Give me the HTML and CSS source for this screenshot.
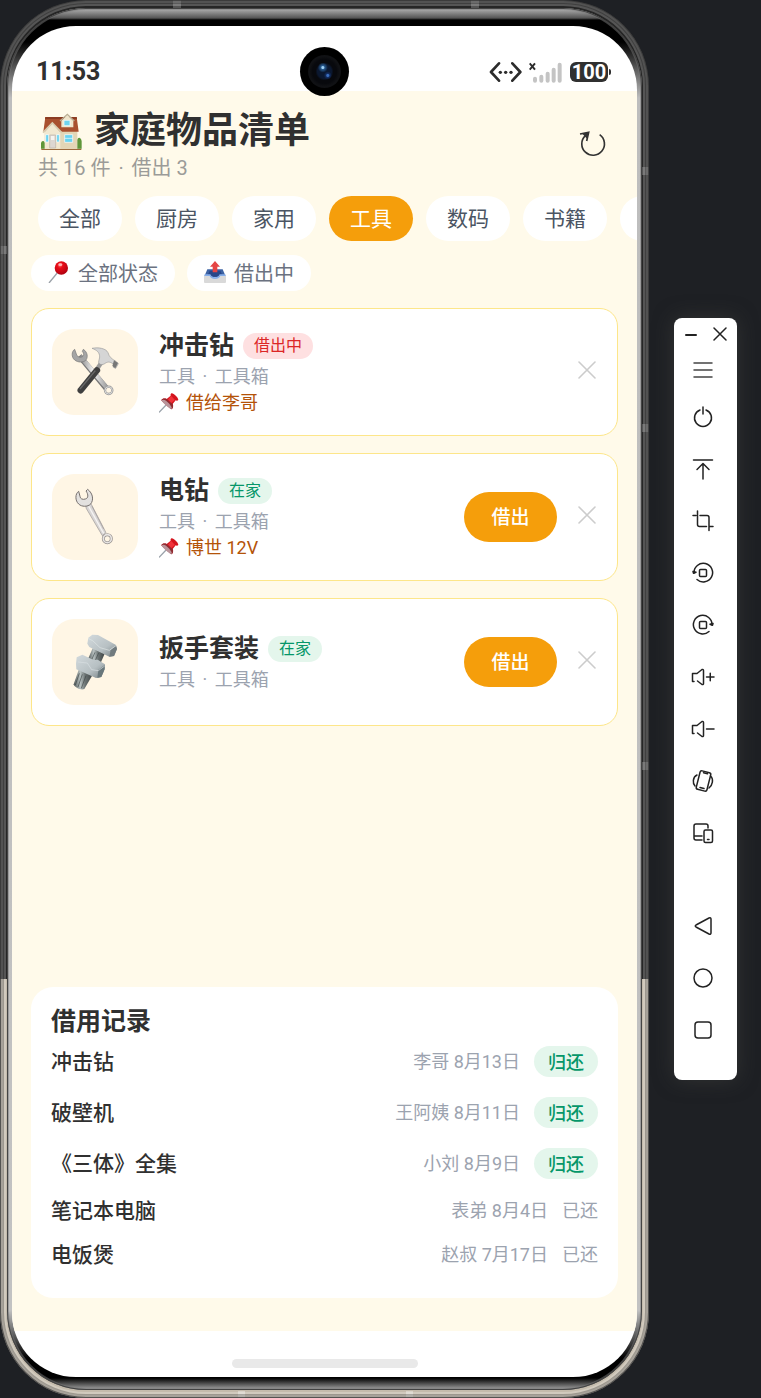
FILE: index.html
```html
<!DOCTYPE html>
<html lang="zh-CN">
<head>
<meta charset="utf-8">
<meta name="viewport" content="width=device-width, initial-scale=1">
<title>家庭物品清单</title>
<link rel="stylesheet" href="styles.css">
</head>
<body>
<svg class="defs" aria-hidden="true">
  <defs>
    <linearGradient id="steel" x1="0" y1="0" x2="1" y2="0"><stop offset="0" stop-color="#8a8a8a"/><stop offset=".5" stop-color="#f0f0f0"/><stop offset="1" stop-color="#a0a0a0"/></linearGradient>
    <linearGradient id="nut" x1="0" y1="0" x2="1" y2="1"><stop offset="0" stop-color="#d3dadd"/><stop offset=".6" stop-color="#b7c0c3"/><stop offset="1" stop-color="#778184"/></linearGradient>
    <linearGradient id="thread" x1="0" y1="0" x2="1" y2="0"><stop offset="0" stop-color="#4f5656"/><stop offset=".35" stop-color="#b9c2c2"/><stop offset=".6" stop-color="#6b7373"/><stop offset="1" stop-color="#3f4545"/></linearGradient>
    <radialGradient id="ball" cx=".4" cy=".3" r=".7"><stop offset="0" stop-color="#ff6a6a"/><stop offset=".3" stop-color="#ea0d18"/><stop offset="1" stop-color="#b00010"/></radialGradient>
    <symbol id="cross" viewBox="0 0 18 18"><path d="M1 1l16 16M17 1L1 17" fill="none" stroke="currentColor" stroke-width="1.6" stroke-linecap="round"/></symbol>
    <symbol id="pushpin" viewBox="479 278 60 60">
      <path d="M503 311L480 335" stroke="#9aa2aa" stroke-width="4" stroke-linecap="round"/>
      <path d="M517 279c5-1 20 12 20 20-2 3-6 3-8 1l-9 11c3 7 1 14-4 16L486 300c2-5 9-7 16-4l12-10c-1-3 0-6 3-7z" fill="#d4141d"/>
      <path d="M486 300c2-5 9-7 16-4l18 15c3 7 1 14-4 16-4-3-26-22-30-27z" fill="#8f2b30"/>
      <path d="M486 300c4-3 10-2 14 1 7 5 14 13 17 20 0 3 0 5-1 6-10-5-24-17-30-27z" fill="#b9949a"/>
      <path d="M515 286l12 13-11 9-10-10z" fill="#f0333a"/>
    </symbol>
  </defs>
</svg>
<div class="desk">
  <main class="phone">
    <div class="bezel">
      <div class="screen">
        <span class="camera"><i></i></span>
        <div class="status">
          <time class="clock">11:53</time>
          <div class="status-icons">
            <svg class="s-net" viewBox="324 182 102 66" aria-hidden="true"><g fill="none" stroke="#2c2c2c" stroke-width="8" stroke-linecap="round" stroke-linejoin="round"><path d="M354 189L330 215l24 26M394 189l24 26-24 26"/></g><g fill="#2c2c2c"><circle cx="358" cy="216" r="5"/><circle cx="374" cy="216" r="5"/><circle cx="390" cy="216" r="5"/></g></svg>
            <svg class="s-sig" viewBox="447 180 105 66" aria-hidden="true"><path d="M449 187l16 19M465 187l-16 19" stroke="#2c2c2c" stroke-width="6"/><g stroke="#c4c4c4" stroke-width="12" stroke-linecap="round"><path d="M465 233v6M484 227v12M503 218v21M521 206v33M539 191v48"/></g></svg>
            <span class="battery">100</span>
          </div>
        </div>

        <div class="app">
          <header class="head">
            <div>
              <h1 class="title">
                <svg viewBox="114 324 138 138" aria-hidden="true">
                  <path d="M124 446h120v4H124z" fill="#9c6a3c"/>
                  <path d="M176 385l56-2v63h-56z" fill="#e3d6b6"/>
                  <path d="M136 351h94l6 44h-57l-22-24-20 24h-7z" fill="#a9502f"/>
                  <path d="M136 351h94l1 6h-96z" fill="#8c3c22"/>
                  <path d="M184 362l18-17 18 17v20h-36z" fill="#efe5cb"/>
                  <path d="M180 363l22-20 21 20" fill="none" stroke="#b9ad93" stroke-width="4"/>
                  <path d="M192 361h18v16h-18z" fill="#6fd3ee" stroke="#fff" stroke-width="2"/>
                  <path d="M133 397l24-26 24 26v49h-48z" fill="#f1e8d1"/>
                  <path d="M129 398l28-29 28 29" fill="none" stroke="#d8cdb2" stroke-width="5"/>
                  <path d="M149 405h18v39h-18z" fill="#ddd7d2" stroke="#bcb3a6" stroke-width="2"/>
                  <path d="M153 408h10v12h-10z" fill="#f6f4f0"/>
                  <path d="M137 404h9v22h-9zM170 404h8v22h-8zM194 404h24v23h-24z" fill="#69d3f1" stroke="#fff" stroke-width="2"/>
                  <path d="M194 415h24" stroke="#fff" stroke-width="2"/>
                  <path d="M123 446v-16c2-9 9-9 11-1v17zM232 446v-26c2-11 12-7 13 4v22z" fill="#5f9639"/>
                </svg>
                家庭物品清单
              </h1>
              <p class="summary">共 16 件 <span class="dot">·</span> 借出 3</p>
            </div>
            <button class="plain refresh" aria-label="刷新"><svg viewBox="592 387 96 90"><path d="M660 404A34 34 0 1 1 617 407M601 402l26-5-6 26" fill="none" stroke="#333" stroke-width="5"/><path d="M608 401l19-4-5 19z" fill="#333"/></svg></button>
          </header>

          <nav class="cats">
            <button class="cat">全部</button>
            <button class="cat">厨房</button>
            <button class="cat">家用</button>
            <button class="cat on">工具</button>
            <button class="cat">数码</button>
            <button class="cat">书籍</button>
            <button class="cat"></button>
          </nav>

          <div class="states">
            <button class="state"><svg viewBox="146 784 66 66" aria-hidden="true"><path d="M176 817L149 850" stroke="#9ba1a8" stroke-width="4"/><circle cx="186" cy="805" r="20" fill="url(#ball)"/><ellipse cx="183" cy="795" rx="6" ry="4" fill="#ffb3b3"/></svg>全部状态</button>
            <button class="state"><svg viewBox="615 786 66 66" aria-hidden="true"><path d="M625 811h46l10 24h-66z" fill="#3c62a3"/><path d="M632 815h32l8 18h-48z" fill="#27478a"/><path d="M615 829h17c3 7 8 9 16 9s13-2 16-9h17v20q0 3-3 3h-60q-3 0-3-3z" fill="#d9d9d9"/><path d="M617 826h17c3 7 8 9 14 9s11-2 14-9h17l1 5h-16c-3 6-8 9-16 9s-13-3-16-9h-16z" fill="#86aeea"/><path d="M648 786l15 17h-8v17h-14v-17h-8z" fill="#e54545"/></svg>借出中</button>
          </div>

          <section class="items">
            <article class="item">
              <div class="tile"><svg viewBox="120 81 150 150" aria-hidden="true">
                <path d="M148 108L229 205" stroke="#777" stroke-width="17"/><path d="M150 108L230 203" stroke="url(#steel)" stroke-width="13"/>
                <circle cx="236" cy="211" r="11" fill="none" stroke="#9b9b9b" stroke-width="7"/><circle cx="236" cy="211" r="11" fill="none" stroke="#dcdcdc" stroke-width="3"/>
                <path d="M134 88c-10 6-10 24 0 32 10 8 25 8 33 1 8-8 6-25-7-33l-3 6c6 8 5 15-2 17-8 2-15-2-16-9z" fill="#a5a5a5" stroke="#747474" stroke-width="2"/>
                <path d="M214 128L196 155" stroke="#9a9a9a" stroke-width="13"/><path d="M201 151L152 211" stroke="#3f3f3f" stroke-width="19" stroke-linecap="round"/><path d="M196 152L150 207" stroke="#696969" stroke-width="4"/>
                <path d="M186 85c19-4 42 0 48 13 3 12 11 19 24 26l7 7-8 14-7-3 2-8c-9-8-17-10-25-5-7 5-14 7-20 1-3-5 1-10 2-19 0-14-9-21-23-26z" fill="#d5d5d5" stroke="#9b9b9b" stroke-width="2"/><path d="M252 121l12 8-8 16-9-7z" fill="#777"/>
              </svg></div>
              <div class="info"><h2 class="name">冲击钻<span class="tag out">借出中</span></h2><p class="place">工具 <span class="dot">·</span> 工具箱</p><p class="note"><svg aria-hidden="true"><use href="#pushpin"/></svg>借给李哥</p></div>
              <button class="plain remove" aria-label="删除"><svg><use href="#cross"/></svg></button>
            </article>
            <article class="item">
              <div class="tile"><svg viewBox="120 81 150 150" aria-hidden="true">
                <path d="M170 112l14 6 44 85-11 9-49-83z" fill="#d8d5d4" stroke="#9c9795" stroke-width="2"/><path d="M176 124L221 205" stroke="#f5f3f2" stroke-width="4"/><path d="M186 124l35 68" stroke="#a19c9b" stroke-width="2"/>
                <path d="M146 79c-11 7-11 28 0 38 9 9 27 9 36 0 9-11 8-31-9-44l-5 5c8 11 7 22-2 24-8 3-16-1-16-8z" fill="#e3e1df" stroke="#77716f" stroke-width="3"/>
                <circle cx="232" cy="221" r="12" fill="#fff6e5" stroke="#96918f" stroke-width="9"/><circle cx="232" cy="221" r="12" fill="none" stroke="#e8e5e3" stroke-width="5"/>
              </svg></div>
              <div class="info"><h2 class="name">电钻<span class="tag">在家</span></h2><p class="place">工具 <span class="dot">·</span> 工具箱</p><p class="note"><svg aria-hidden="true"><use href="#pushpin"/></svg>博世 12V</p></div>
              <button class="lend">借出</button>
              <button class="plain remove" aria-label="删除"><svg><use href="#cross"/></svg></button>
            </article>
            <article class="item">
              <div class="tile"><svg viewBox="120 516 150 150" aria-hidden="true">
                <path d="M147 612l41 17-25 43c-10 5-29-4-32-14z" fill="url(#thread)"/><path d="M148 625l-12 35M157 628l-13 38M168 632l-14 38" stroke="#3f4747" stroke-width="2"/>
                <path d="M188 550l36 16-15 35-35-19z" fill="url(#thread)"/><path d="M195 562l-9 20M206 564l-10 22" stroke="#464e4e" stroke-width="2"/>
                <path d="M175 518l12-9 17 1 54 30 3 12-9 21-14 2-60-29-6-10z" fill="url(#nut)"/><path d="M258 542l3 10-9 21-14 2 4-20z" fill="#717b7e"/><path d="M174 520l14 7 22 21 28 8 20-14" fill="none" stroke="#dfe5e6" stroke-width="2"/>
                <path d="M140 577l17-8 15 7 18 9 13-1 22 14-1 15-10 23-16 3-59-26-1-17z" fill="url(#nut)"/><path d="M224 600l0 13-10 23-12 3 3-24z" fill="#69777b"/><path d="M144 591l28 3 13 20 20 3 19-14" fill="none" stroke="#d9e0e2" stroke-width="2"/>
              </svg></div>
              <div class="info"><h2 class="name">扳手套装<span class="tag">在家</span></h2><p class="place">工具 <span class="dot">·</span> 工具箱</p></div>
              <button class="lend">借出</button>
              <button class="plain remove" aria-label="删除"><svg><use href="#cross"/></svg></button>
            </article>
          </section>

          <section class="records">
            <h2 class="rec-title">借用记录</h2>
            <ul class="rec-list">
              <li><span class="what">冲击钻</span><span class="who">李哥 8月13日</span><button class="return">归还</button></li>
              <li><span class="what">破壁机</span><span class="who">王阿姨 8月11日</span><button class="return">归还</button></li>
              <li><span class="what">《三体》全集</span><span class="who">小刘 8月9日</span><button class="return">归还</button></li>
              <li><span class="what">笔记本电脑</span><span class="who">表弟 8月4日</span><span class="done">已还</span></li>
              <li><span class="what">电饭煲</span><span class="who">赵叔 7月17日</span><span class="done">已还</span></li>
            </ul>
          </section>
        </div>
        <div class="homebar"><i></i></div>
      </div>
    </div>
  </main>

  <aside class="tools">
    <div class="win">
      <button class="plain" aria-label="最小化"><svg viewBox="0 0 14 14"><path d="M2 8h10" stroke-width="2"/></svg></button>
      <button class="plain" aria-label="关闭"><svg viewBox="0 0 14 14"><path d="M1 1l12 12M13 1L1 13"/></svg></button>
    </div>
    <button class="tool menu" aria-label="菜单"><svg viewBox="0 0 24 24"><path d="M3 5h18M3 12h18M3 19h18" stroke="#444"/></svg></button>
    <button class="tool" aria-label="电源"><svg viewBox="0 0 24 24"><path d="M9 5a8.500 8.500 0 1 0 6 0M12 2v7"/></svg></button>
    <button class="tool" aria-label="上滑"><svg viewBox="0 0 24 24"><path d="M2.500 3h19M12 22V7M6 12.500l6-6 6 6"/></svg></button>
    <button class="tool" aria-label="截图"><svg viewBox="0 0 24 24"><path d="M2 6.500h3M9 6.500h7q2 0 2 2V21.500M6.500 2v13.500q0 2 2 2h7M18 17.500h4"/></svg></button>
    <button class="tool" aria-label="向左旋转"><svg viewBox="0 0 24 24"><path d="M3 12a9.300 9.300 0 1 1 3 6.500"/><path d="M2 10.500l3 .8-2.500 1z" fill="#222"/><rect x="8.500" y="8.500" width="7" height="7" rx="1"/></svg></button>
    <button class="tool" aria-label="向右旋转"><svg viewBox="0 0 24 24"><path d="M21 12a9.300 9.300 0 1 0-3 6.500"/><path d="M22 10.500l-3 .8 2.500 1z" fill="#222"/><rect x="8.500" y="8.500" width="7" height="7" rx="1"/></svg></button>
    <button class="tool" aria-label="音量加"><svg viewBox="0 0 24 24"><path d="M3 16.500h-1.500V8.500H6L11 4.500q1.500-.5 1.500 1v13q0 1.500-1.500 1L6.500 16M15.500 12h7.500M19.250 8.250v7.500"/></svg></button>
    <button class="tool" aria-label="音量减"><svg viewBox="0 0 24 24"><path d="M3 16.500h-1.500V8.500H6L11 4.500q1.500-.5 1.500 1v13q0 1.500-1.500 1L6.500 16M15.500 12h7.500"/></svg></button>
    <button class="tool" aria-label="摇一摇"><svg viewBox="0 0 24 24"><rect x="7" y="2.500" width="11" height="19" rx="1.800" transform="rotate(14 12.500 12)"/><path d="M9 18.500l4 1M12.500 3.800l4 1M6 6C1.500 8 1.500 14.500 4 17M19.500 7c3.500 3 2 9.500-1.500 12"/></svg></button>
    <button class="tool" aria-label="多设备"><svg viewBox="0 0 24 24"><path d="M17 7V5q0-2-2-2H5Q3 3 3 5v12q0 2 2 2h6M3 15h8"/><rect x="13" y="9" width="8.500" height="12.500" rx="1.500"/><path d="M16.500 18.500h1.500"/></svg></button>
    <button class="tool nav-start" aria-label="返回"><svg viewBox="0 0 24 24"><path d="M5 11Q3.500 12 5 13L18 20q2 .8 2-1.200V5.200Q20 3.200 18 4z"/></svg></button>
    <button class="tool" aria-label="主页"><svg viewBox="0 0 24 24"><circle cx="12" cy="12" r="9"/></svg></button>
    <button class="tool" aria-label="最近任务"><svg viewBox="0 0 24 24"><rect x="4" y="4" width="16" height="16" rx="3"/></svg></button>
  </aside>
</div>
</body>
</html>
```

FILE: styles.css
```css
* { box-sizing: border-box; }
body {
  margin: 0;
  background: #1e2024;
  color: #303030;
  font-family: Roboto, "Noto Sans CJK SC", sans-serif;
}
h1, h2, p, ul { margin: 0; padding: 0; }
ul { list-style: none; }
button {
  margin: 0;
  padding: 0;
  border: 0;
  font-family: inherit;
  cursor: pointer;
}
svg { display: block; flex: none; }
.defs { position: absolute; width: 0; height: 0; }
.plain { background: none; }

.desk {
  display: flex;
  align-items: flex-start;
  gap: 25px;
  padding-right: 24px;
  min-height: 100vh;
}

/* Phone body */
.phone {
  flex: 1;
  display: flex;
  align-self: stretch;
  min-width: 0;
  padding: 8px 7px;
  border-radius: 86px;
  background:
    linear-gradient(#555, #555) 173px 0 / 8px 8px no-repeat,
    linear-gradient(#555, #555) 471px 0 / 8px 8px no-repeat,
    linear-gradient(#555, #555) 0 246px / 7px 8px no-repeat,
    linear-gradient(#555, #555) 100% 167px / 7px 8px no-repeat,
    linear-gradient(#555, #555) 100% 424px / 7px 8px no-repeat,
    linear-gradient(#555, #555) 100% 762px / 7px 8px no-repeat,
    linear-gradient(#d8d2c8, #d8d2c8) 238px 100% / 7px 7px no-repeat,
    linear-gradient(#d8d2c8, #d8d2c8) 406px 100% / 7px 7px no-repeat,
    linear-gradient(#262626 0 70%, #c4bbac 70%);
  box-shadow:
    inset 0 0 0 1px rgba(50, 50, 50, .7),
    inset 0 0 0 3px rgba(255, 255, 255, .1),
    inset 0 0 0 4px rgba(0, 0, 0, .25),
    inset 0 0 0 6px rgba(255, 255, 255, .22);
}
.bezel {
  flex: 1;
  display: flex;
  min-width: 0;
  padding: 18px 5px 13px;
  border-radius: 79px;
  background: linear-gradient(#b8b8b8, #555 10px, #000 12px, #000 34px, #bdbdbd 90px, #c2c2c2 calc(100% - 80px), #000 calc(100% - 32px), #000 calc(100% - 12px), #aaa 100%);
  box-shadow: inset 0 0 0 1px #444, inset 0 0 0 2px rgba(120, 120, 120, .5);
}
.screen {
  position: relative;
  flex: 1;
  display: flex;
  flex-direction: column;
  min-width: 0;
  overflow: hidden;
  border-radius: 64px;
  background: #fff;
}
.camera {
  position: absolute;
  top: 21px;
  left: 50%;
  display: grid;
  place-items: center;
  width: 49px;
  height: 49px;
  margin-left: -25px;
  border-radius: 50%;
  background: #000;
}
.camera i {
  width: 33px;
  height: 33px;
  border-radius: 50%;
  background:
    radial-gradient(circle at 45% 38%, #9fd0f5 0 1px, rgba(45, 105, 165, .8) 2px, transparent 5px),
    radial-gradient(circle at 60% 62%, #3b6fc0 0 1px, rgba(20, 50, 110, .8) 2px, transparent 4px),
    radial-gradient(circle, #0b1830 0 7px, #08090d 9px 12px, #101114 15px);
}

/* Status bar */
.status {
  display: flex;
  align-items: center;
  justify-content: space-between;
  height: 65px;
  padding: 26px 26px 0 24px;
}
.clock { font-size: 25px; line-height: 30px; font-weight: 700; }
.status-icons { display: flex; align-items: center; gap: 6px; }
.s-net { width: 34px; height: 22px; }
.s-sig { width: 35px; height: 22px; }
.battery {
  position: relative;
  width: 38px;
  height: 20px;
  margin-right: 3px;
  border-radius: 6px;
  background: #303030;
  color: #fff;
  font: 700 20px/20px Roboto, sans-serif;
  text-align: center;
}
.battery::after {
  content: "";
  position: absolute;
  top: 7px;
  right: -3px;
  width: 2px;
  height: 6px;
  border-radius: 0 2px 2px 0;
  background: #303030;
}

/* App */
.app {
  flex: 1;
  display: flex;
  flex-direction: column;
  padding: 16px 0 33px;
  background: #fffaea;
}
.head {
  display: flex;
  align-items: center;
  justify-content: space-between;
  padding: 0 28px 0 26px;
}
.title {
  display: flex;
  align-items: center;
  gap: 10px;
  font-size: 36px;
  line-height: 48px;
  font-weight: 700;
}
.title svg { width: 46px; height: 46px; }
.summary { color: #9b9b98; font-size: 20px; line-height: 26px; }
.dot { padding: 0 3px; }
.refresh svg { width: 32px; height: 30px; }

.cats {
  display: flex;
  gap: 13px;
  margin-top: 15px;
  padding-left: 26px;
  overflow: hidden;
}
.cat {
  flex: none;
  min-width: 84px;
  height: 45px;
  padding-bottom: 3px;
  border-radius: 23px;
  background: #fff;
  color: #4b5563;
  font-size: 21px;
}
.cat.on { background: #f59e0b; color: #fff; }
.states {
  display: flex;
  gap: 12px;
  margin-top: 14px;
  padding: 0 19px;
}
.state {
  display: flex;
  align-items: center;
  gap: 8px;
  height: 36px;
  padding: 0 17px 2px;
  border-radius: 18px;
  background: #fff;
  color: #6b7280;
  font-size: 20px;
}
.state svg { width: 22px; height: 22px; }

.items {
  flex: 1;
  display: flex;
  flex-direction: column;
  gap: 17px;
  padding: 17px 19px;
}
.item {
  display: flex;
  align-items: center;
  min-height: 128px;
  padding: 19px 21px 19px 20px;
  border: 1px solid #fde68a;
  border-radius: 18px;
  background: #fff;
}
.tile {
  display: grid;
  place-items: center;
  width: 86px;
  height: 86px;
  border-radius: 22px;
  background: #fff6e5;
}
.tile svg { width: 50px; height: 50px; overflow: visible; }
.info { flex: 1; min-width: 0; padding-left: 21px; }
.name {
  display: flex;
  align-items: center;
  gap: 9px;
  font-size: 25px;
  line-height: 34px;
  font-weight: 700;
}
.tag {
  padding: 0 11px;
  border-radius: 13px;
  background: #e4f6ec;
  color: #059669;
  font-size: 16px;
  line-height: 26px;
  font-weight: 400;
}
.tag.out { background: #fee0e1; color: #dc2626; }
.place { color: #9ca3af; font-size: 18px; line-height: 27px; }
.note {
  display: flex;
  align-items: center;
  gap: 7px;
  color: #b45309;
  font-size: 18px;
  line-height: 26px;
}
.note svg { width: 20px; height: 20px; }
.lend {
  width: 93px;
  height: 50px;
  padding-bottom: 3px;
  border-radius: 25px;
  background: #f59e0b;
  color: #fff;
  font-size: 19px;
  font-weight: 500;
}
.remove { margin-left: 21px; padding-bottom: 4px; color: #ccc; }
.remove svg { width: 18px; height: 18px; }

.records {
  margin: 0 19px;
  padding: 18px 20px 31px;
  border-radius: 22px;
  background: #fff;
}
.rec-title { font-size: 25px; line-height: 34px; font-weight: 700; }
.rec-list {
  display: flex;
  flex-direction: column;
  gap: 20px;
  margin-top: 7px;
}
.rec-list li { display: flex; align-items: center; gap: 14px; }
.what { flex: 1; font-size: 21px; line-height: 24px; font-weight: 500; }
.who, .done { color: #9ca3af; font-size: 18px; line-height: 24px; }
.return {
  width: 64px;
  height: 31px;
  padding-bottom: 2px;
  border-radius: 16px;
  background: #e4f6ec;
  color: #059669;
  font-size: 18px;
  font-weight: 500;
}
.homebar { display: grid; justify-items: center; height: 46px; padding-top: 28px; }
.homebar i { width: 186px; height: 9px; border-radius: 5px; background: #e9e9e9; }

/* Emulator toolbar */
.tools {
  display: flex;
  flex-direction: column;
  width: 63px;
  margin-top: 318px;
  padding-bottom: 24px;
  border-radius: 8px;
  background: #fff;
  box-shadow: 0 0 20px rgba(70, 70, 65, .5);
}
.tools svg {
  fill: none;
  stroke: #222;
  stroke-width: 1.500;
  stroke-linecap: round;
  stroke-linejoin: round;
}
.win { display: flex; justify-content: center; gap: 15px; height: 31px; }
.win svg { width: 14px; height: 14px; }
.tool {
  display: grid;
  place-items: center;
  height: 52px;
  padding-right: 6px;
  background: none;
}
.tool svg { width: 24px; height: 24px; }
.tool.menu { height: 42px; }
.nav-start { margin-top: 41px; }
```
